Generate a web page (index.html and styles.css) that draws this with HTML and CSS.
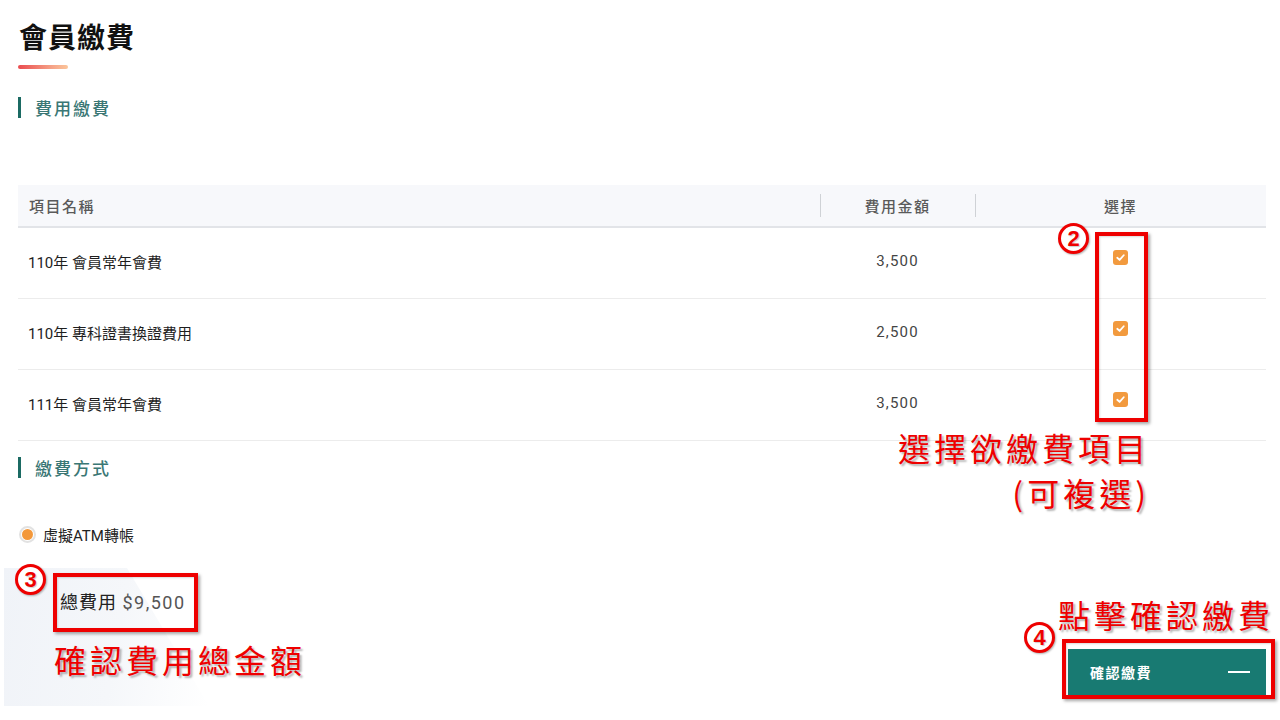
FILE: index.html
```html
<!DOCTYPE html>
<html lang="zh-Hant">
<head>
<meta charset="utf-8">
<title>會員繳費</title>
<link rel="stylesheet" href="styles.css">
</head>
<body>
<div class="deco-panel"></div>
<main class="page">
  <h1 class="page-title">會員繳費</h1>
  <div class="title-bar"></div>

  <h2 class="section-title section-fee">費用繳費</h2>

  <table class="fee-table">
    <colgroup>
      <col class="col-name">
      <col class="col-amount">
      <col class="col-select">
    </colgroup>
    <thead>
      <tr>
        <th class="th-name">項目名稱</th>
        <th class="th-amount">費用金額</th>
        <th class="th-select">選擇</th>
      </tr>
    </thead>
    <tbody>
      <tr>
        <td class="td-name">110年 會員常年會費</td>
        <td class="td-amount">3,500</td>
        <td class="td-select"><span class="checkbox"><svg viewBox="0 0 16 16" width="16" height="16"><path d="M4 8.3 L6.9 11 L12 5.2" fill="none" stroke="#fff" stroke-width="2.2" stroke-linecap="round" stroke-linejoin="round"/></svg></span></td>
      </tr>
      <tr>
        <td class="td-name">110年 專科證書換證費用</td>
        <td class="td-amount">2,500</td>
        <td class="td-select"><span class="checkbox"><svg viewBox="0 0 16 16" width="16" height="16"><path d="M4 8.3 L6.9 11 L12 5.2" fill="none" stroke="#fff" stroke-width="2.2" stroke-linecap="round" stroke-linejoin="round"/></svg></span></td>
      </tr>
      <tr>
        <td class="td-name">111年 會員常年會費</td>
        <td class="td-amount">3,500</td>
        <td class="td-select"><span class="checkbox"><svg viewBox="0 0 16 16" width="16" height="16"><path d="M4 8.3 L6.9 11 L12 5.2" fill="none" stroke="#fff" stroke-width="2.2" stroke-linecap="round" stroke-linejoin="round"/></svg></span></td>
      </tr>
    </tbody>
  </table>

  <h2 class="section-title section-method">繳費方式</h2>

  <label class="radio-row">
    <span class="radio"><span class="radio-dot"></span></span>
    <span class="radio-label">虛擬ATM轉帳</span>
  </label>

  <div class="total">總費用 <span class="total-amount">$9,500</span></div>

  <div class="actions">
    <button class="btn-confirm" type="button"><span>確認繳費</span><span class="btn-line"></span></button>
  </div>
</main>

<!-- annotation overlays -->
<div class="ann-box ann-box-check"></div>
<div class="ann-num ann-num-2">2</div>
<div class="ann-text ann-text-check">選擇欲繳費項目<br>(可複選)</div>

<div class="ann-box ann-box-total"></div>
<div class="ann-num ann-num-3">3</div>
<div class="ann-text ann-text-total">確認費用總金額</div>

<div class="ann-text ann-text-btn">點擊確認繳費</div>
<div class="ann-num ann-num-4">4</div>
<div class="ann-box ann-box-btn"></div>
</body>
</html>
```
FILE: styles.css
```css
* { box-sizing: border-box; }

html, body {
  margin: 0;
  padding: 0;
  background: #fff;
}

body {
  font-family: Roboto, "Noto Sans CJK TC", "Noto Sans", sans-serif;
  color: #222;
  position: relative;
  width: 1280px;
  height: 720px;
  overflow: hidden;
}

.deco-panel {
  position: absolute;
  left: 4px;
  top: 568px;
  width: 205px;
  height: 138px;
  background: linear-gradient(100deg, #f0f3f8 0%, #f5f7fa 55%, rgba(255,255,255,0) 100%);
  clip-path: polygon(0 0, 60% 0, 100% 100%, 0 100%);
}

.page {
  position: relative;
  padding: 16px 14px 0 18px;
}

.page-title {
  margin: 0 0 0 1px;
  font-family: "Noto Sans CJK TC", sans-serif;
  font-size: 28px;
  line-height: 40px;
  font-weight: 700;
  letter-spacing: 1px;
  color: #111;
}

.title-bar {
  margin-top: 9px;
  width: 50px;
  height: 4px;
  border-radius: 2px;
  background: linear-gradient(90deg, #ea4b4f 0%, #f6a589 70%, #fbc59a 100%);
}

.section-title {
  margin: 0;
  height: 21px;
  border-left: 3px solid #1b6a63;
  padding-left: 14px;
  font-family: "Noto Sans CJK TC", sans-serif;
  font-size: 17px;
  line-height: 21px;
  font-weight: 500;
  letter-spacing: 2px;
  color: #3a7775;
}

.section-fee { margin-top: 28px; }
.section-method { margin-top: 16px; }

.fee-table {
  margin-top: 67px;
  width: 1248px;
  border-collapse: collapse;
  table-layout: fixed;
}

.col-name { width: 802px; }
.col-amount { width: 155px; }
.col-select { width: 291px; }

.fee-table thead tr {
  background: #f7f8fb;
  border-bottom: 2px solid #e2e4e8;
}

.fee-table th {
  height: 42px;
  padding: 0;
  font-family: "Noto Sans CJK TC", sans-serif;
  font-size: 15px;
  font-weight: 500;
  letter-spacing: 1.5px;
  color: #5a5a5a;
  position: relative;
}

.th-name { text-align: left; padding-left: 11px !important; }
.th-amount, .th-select { text-align: center; }

.th-amount::before,
.th-select::before {
  content: "";
  position: absolute;
  left: 0;
  top: 9px;
  bottom: 9px;
  width: 1px;
  background: #cfd2d6;
}

.fee-table tbody tr {
  border-bottom: 1px solid #ececec;
}

.fee-table td {
  height: 71px;
  padding: 0;
  font-size: 15px;
  vertical-align: middle;
}

.td-name {
  padding-left: 10px !important;
  color: #1e1e1e;
  font-weight: 400;
  padding-bottom: 2px !important;
}

.td-amount {
  text-align: center;
  letter-spacing: 1.2px;
  color: #444;
  padding-left: 0 !important;
  padding-bottom: 3px !important;
}

.td-select { text-align: center; }

.checkbox {
  display: inline-flex;
  align-items: center;
  justify-content: center;
  width: 15px;
  height: 15px;
  border-radius: 3px;
  background: #f29a3e;
  vertical-align: middle;
  margin-bottom: 10px;
}

.checkbox svg { width: 13px; height: 13px; }

.radio-row {
  margin-top: 45px;
  display: flex;
  align-items: center;
  gap: 7px;
  height: 24px;
  padding-left: 1px;
}

.radio {
  width: 17px;
  height: 17px;
  border-radius: 50%;
  border: 2px solid #e2e2e2;
  display: flex;
  align-items: center;
  justify-content: center;
}

.radio-dot {
  width: 11px;
  height: 11px;
  border-radius: 50%;
  background: #f3983a;
}

.radio-label {
  font-size: 15px;
  font-weight: 400;
  color: #222;
}

.total {
  margin-top: 44px;
  padding-left: 42px;
  height: 24px;
  line-height: 24px;
  font-size: 18px;
  letter-spacing: 1px;
  font-weight: 400;
  color: #222;
}

.total-amount {
  letter-spacing: 1.5px;
  color: #555;
}

.actions {
  margin-top: 34px;
  display: flex;
  justify-content: flex-end;
}

.btn-confirm {
  width: 198px;
  height: 46px;
  border: none;
  background: #187a72;
  color: #fff;
  display: flex;
  align-items: center;
  justify-content: space-between;
  padding: 0 16px 0 22px;
  font-family: "Noto Sans CJK TC", sans-serif;
  font-size: 14px;
  font-weight: 700;
  letter-spacing: 1.5px;
  cursor: pointer;
}

.btn-line {
  display: block;
  width: 22px;
  height: 2px;
  background: #fff;
}

/* annotations */
.ann-box {
  position: absolute;
  border: 4px solid #ee0000;
  box-shadow: 2px 2px 3px rgba(0,0,0,0.35), inset 1px 1px 2px rgba(0,0,0,0.15);
}

.ann-box-check { left: 1095px; top: 232px; width: 53px; height: 190px; }
.ann-box-total { left: 53px; top: 573px; width: 145px; height: 59px; }
.ann-box-btn { left: 1062px; top: 639px; width: 213px; height: 60px; }

.ann-num {
  position: absolute;
  width: 31px;
  height: 31px;
  border-radius: 50%;
  border: 3px solid #ee0000;
  color: #ee0000;
  background: #fff;
  font-family: "Liberation Sans", "Noto Sans", sans-serif;
  font-weight: 700;
  font-size: 22px;
  line-height: 25px;
  text-align: center;
  box-shadow: 1px 1px 2px rgba(0,0,0,0.3);
  text-shadow: 1px 1px 1px rgba(0,0,0,0.2);
}

.ann-num-2 { left: 1058px; top: 223px; }
.ann-num-3 { left: 15px; top: 564px; }
.ann-num-4 { left: 1024px; top: 622px; }

.ann-text {
  position: absolute;
  color: #ee0000;
  font-family: "Noto Sans CJK TC", sans-serif;
  font-size: 32px;
  line-height: 45px;
  letter-spacing: 4px;
  font-weight: 400;
  text-shadow: 2px 2px 2px rgba(0,0,0,0.3);
  white-space: nowrap;
}

.ann-text-check {
  left: 850px;
  top: 425px;
  width: 300px;
  text-align: right;
}

.ann-text-total { left: 54px; top: 637px; }
.ann-text-btn { left: 1058px; top: 592px; }
```
